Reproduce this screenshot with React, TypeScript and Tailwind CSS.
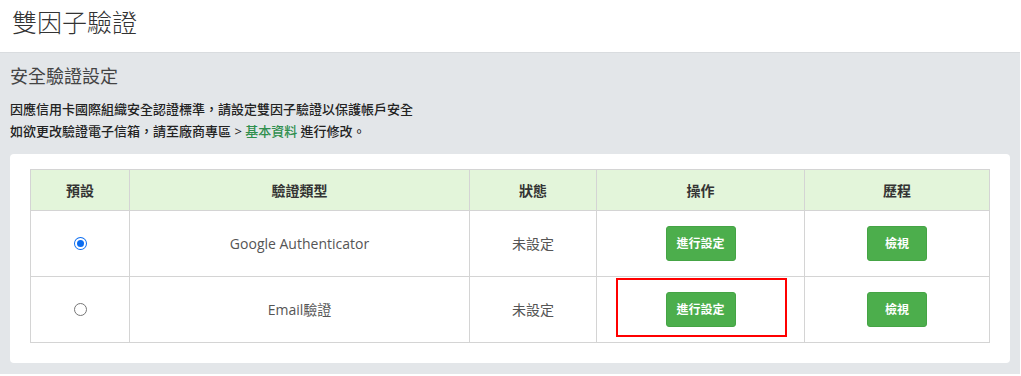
import React from "react";

const font = { fontFamily: '"Open Sans", "Noto Sans CJK TC", sans-serif' };

function GreenBtn({ label, w }: { label: string; w: string }) {
  return (
    <button
      className={`${w} h-[35px] rounded-[3px] bg-[#4cae4c] border border-[#45a445] text-white text-[12px] font-bold leading-none`}
    >
      {label}
    </button>
  );
}

function Radio({ checked }: { checked: boolean }) {
  return checked ? (
    <span className="inline-flex w-[13px] h-[13px] rounded-full bg-[#0a6cf0] items-center justify-center">
      <span className="w-[11px] h-[11px] rounded-full bg-white flex items-center justify-center">
        <span className="w-[7px] h-[7px] rounded-full bg-[#0a6cf0]" />
      </span>
    </span>
  ) : (
    <span className="inline-block w-[13px] h-[13px] rounded-full border border-[#767676] bg-white" />
  );
}

export default function App() {
  return (
    <div className="w-[1021px] h-[376px] bg-white overflow-hidden" style={font}>
      <div className="h-[52px] pl-[12px] pt-[4px]">
        <h1 className="text-[25px] leading-[36px] text-[#333] font-light">雙因子驗證</h1>
      </div>
      <div className="w-[1020px] bg-[#e3e6e9] border-t border-[#d9dcdf] px-[10px] pb-[11px]">
        <div className="pt-[10px] text-[18px] leading-[26px] text-[#444]">安全驗證設定</div>
        <div className="pt-[9px] text-[13px] leading-[22px] text-[#222] font-medium">
          <div>因應信用卡國際組織安全認證標準，請設定雙因子驗證以保護帳戶安全</div>
          <div>
            如欲更改驗證電子信箱，請至廠商專區 &gt; <span className="text-[#2f8f4e]">基本資料</span> 進行修改。
          </div>
        </div>
        <div className="mt-[12px] bg-white rounded-[4px] pt-[15px] px-[20px] pb-[20px]">
          <table className="w-full border-collapse text-[14px]">
            <colgroup>
              <col className="w-[99px]" />
              <col className="w-[340px]" />
              <col className="w-[127px]" />
              <col className="w-[208px]" />
              <col />
            </colgroup>
            <thead>
              <tr className="h-[41px] bg-[#e3f5da]">
                {["預設", "驗證類型", "狀態", "操作", "歷程"].map((h) => (
                  <th key={h} className="border border-[#d4d4d4] font-semibold text-[#333]">
                    {h}
                  </th>
                ))}
              </tr>
            </thead>
            <tbody className="text-[#555]">
              <tr className="h-[66px]">
                <td className="border border-[#d4d4d4] text-center align-middle">
                  <div className="flex justify-center"><Radio checked /></div>
                </td>
                <td className="border border-[#d4d4d4] text-center">Google Authenticator</td>
                <td className="border border-[#d4d4d4] text-center">未設定</td>
                <td className="border border-[#d4d4d4] text-center">
                  <div className="flex justify-center"><GreenBtn label="進行設定" w="w-[70px]" /></div>
                </td>
                <td className="border border-[#d4d4d4] text-center">
                  <div className="flex justify-center"><GreenBtn label="檢視" w="w-[60px]" /></div>
                </td>
              </tr>
              <tr className="h-[66px]">
                <td className="border border-[#d4d4d4] text-center align-middle">
                  <div className="flex justify-center"><Radio checked={false} /></div>
                </td>
                <td className="border border-[#d4d4d4] text-center">Email驗證</td>
                <td className="border border-[#d4d4d4] text-center">未設定</td>
                <td className="border border-[#d4d4d4] text-center">
                  <div className="flex justify-center">
                    <div className="relative">
                      <GreenBtn label="進行設定" w="w-[70px]" />
                      <div className="absolute left-[-50px] top-[-14px] w-[171px] h-[59px] border-2 border-[#ff0000] pointer-events-none" />
                    </div>
                  </div>
                </td>
                <td className="border border-[#d4d4d4] text-center">
                  <div className="flex justify-center"><GreenBtn label="檢視" w="w-[60px]" /></div>
                </td>
              </tr>
            </tbody>
          </table>
        </div>
      </div>
    </div>
  );
}
